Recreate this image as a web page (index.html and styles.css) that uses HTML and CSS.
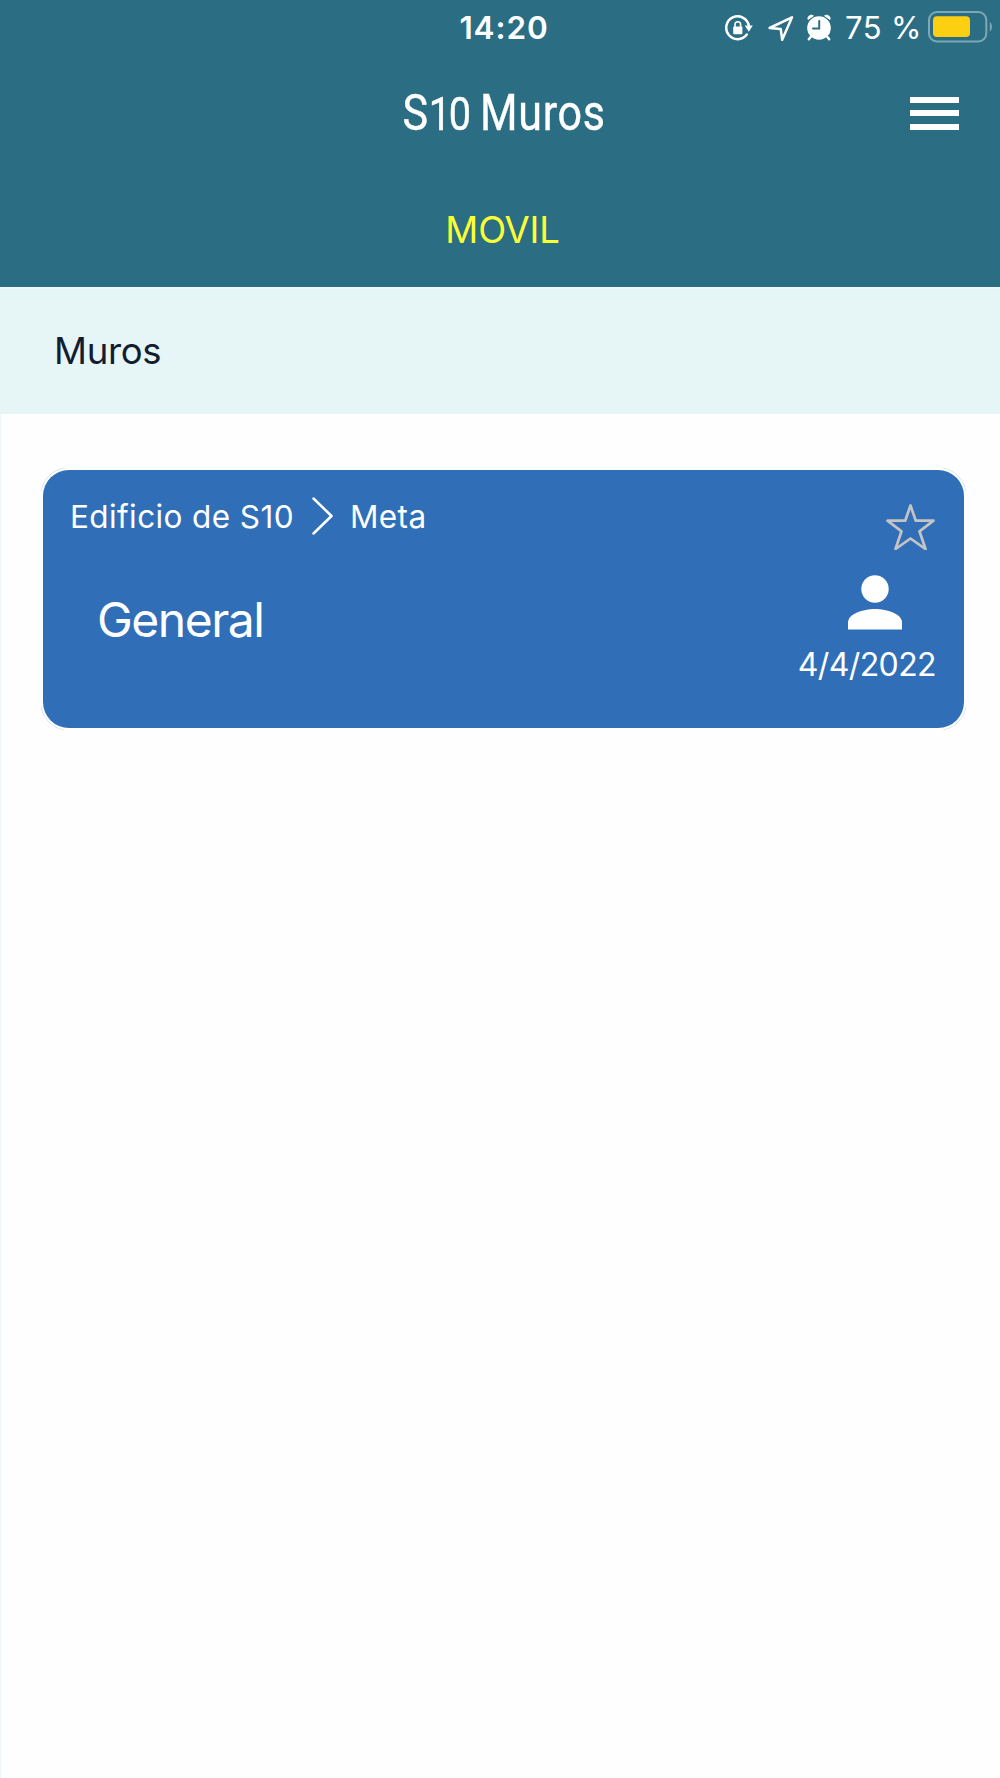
FILE: index.html
```html
<!DOCTYPE html>
<html lang="es">
<head>
    <meta charset="UTF-8">
    <meta name="viewport" content="width=device-width, initial-scale=1.0">
    <title>S10 Muros</title>
    <link rel="stylesheet" href="styles.css">
</head>
<body>
    <header class="header">
        <div class="status">
            <span class="time">14:20</span>
            <div class="indicators">
                <svg class="lock" width="28" height="28" viewBox="0 0 28 28">
                    <path d="M23.8 11.5A11.4 11.4 0 1 0 21.8 20.5" fill="none" stroke="#fff" stroke-width="2.5" stroke-linecap="round"/>
                    <path d="M19.8 11.5h8l-4 6.3z" fill="#fff"/>
                    <rect x="8.2" y="12.6" width="9.2" height="7.6" rx="1" fill="#fff"/>
                    <path d="M10 13.5v-3a2.8 2.8 0 0 1 5.6 0v3" fill="none" stroke="#fff" stroke-width="1.6"/>
                </svg>
                <svg class="arrow" width="26" height="26" viewBox="0 0 26 26">
                    <path d="M1.6 13 24 2.3 14.2 24.8 12.7 14z" fill="none" stroke="#fff" stroke-width="2.5" stroke-linejoin="round"/>
                </svg>
                <svg class="alarm" width="26" height="28" viewBox="0 0 26 28">
                    <path d="M5 22.5 2.8 25.3M21 22.5l2.2 2.8" stroke="#fff" stroke-width="2.4" stroke-linecap="round"/>
                    <path d="M2 5.5A3.5 3.5 0 0 1 7.4 1.8zM24 5.5A3.5 3.5 0 0 0 18.6 1.8z" fill="#fff" stroke="#fff" stroke-width="1" stroke-linejoin="round"/>
                    <circle cx="13" cy="14" r="11.8" fill="#fff"/>
                    <path d="M13.2 7v7.5H7" fill="none" stroke="#2b6e83" stroke-width="2" stroke-linecap="round"/>
                </svg>
                <span class="percent">75 %</span>
                <svg class="battery" width="65" height="32" viewBox="0 0 65 32">
                    <rect x="1" y="1" width="57.3" height="29.5" rx="8" fill="none" stroke="#7fa8b5" stroke-width="2"/>
                    <rect x="5" y="5.2" width="37" height="20.8" rx="4" fill="#fdcf11"/>
                    <path d="M61.8 10.8c2.8 2 2.8 8 0 10z" fill="#7fa8b5"/>
                </svg>
            </div>
        </div>
        <div class="bar">
            <h1 class="title">S<span class="digits">10</span> Muros</h1>
            <button class="menu" type="button" aria-label="Menú">
                <span></span>
                <span></span>
                <span></span>
            </button>
        </div>
        <p class="company">MOVIL</p>
    </header>

    <h2 class="section">Muros</h2>

    <main class="list">
        <article class="card">
            <div class="info">
                <div class="path">
                    <span>Edificio de S10</span>
                    <svg class="chevron" width="22" height="38" viewBox="0 0 22 38">
                        <path d="M1.5 1.5 19.5 19 1.5 36.5" fill="none" stroke="#fff" stroke-width="2.5" stroke-linecap="round" stroke-linejoin="round"/>
                    </svg>
                    <span class="place">Meta</span>
                </div>
                <h3 class="name">General</h3>
            </div>
            <div class="side">
                <svg class="star" width="50" height="48" viewBox="0 0 50 48">
                    <path d="M24.5 3.5 29.8 18.7H47.5L33.5 29.3 39.5 47 24.5 36.5 9.5 47 15.5 29.3 1.5 18.7H19.2z" fill="none" stroke="#c4c4c4" stroke-width="2.7" stroke-linejoin="round"/>
                </svg>
                <svg class="person" width="54" height="55" viewBox="0 0 54 55">
                    <circle cx="27" cy="14" r="13.7" fill="#fff"/>
                    <path d="M0 54.5V47.5C0 39 15 34 27 34S54 39 54 47.5V54.5z" fill="#fff"/>
                </svg>
                <span class="date">4/4/2022</span>
            </div>
        </article>
    </main>
</body>
</html>
```
FILE: styles.css
```css
*{
    box-sizing: border-box;
}
body{
    margin: 0;
    min-height: 1778px;
    background-color: #fefefe;
    font-family: Inter, "Liberation Sans", sans-serif;
    color: white;
}
h1, h2, h3, p{
    margin: 0;
    font-weight: 400;
}
svg{
    display: block;
}
.header{
    height: 287px;
    background-color: #2b6e83;
}
.status{
    display: grid;
    grid-template-columns: 1fr auto 1fr;
    align-items: center;
    height: 55px;
    padding: 0 7px 0 15px;
}
.time{
    grid-column: 2;
    font-size: 31.5px;
    font-weight: 600;
    letter-spacing: 0.9px;
}
.indicators{
    display: flex;
    justify-content: flex-end;
    align-items: center;
}
.arrow{
    margin-left: 15px;
}
.alarm{
    margin-left: 12px;
}
.percent{
    width: 75px;
    margin: 0 8px 0 13px;
    font-size: 31px;
    letter-spacing: 0.4px;
    white-space: nowrap;
}
.battery{
    flex: none;
    margin-top: -2px;
}
.bar{
    display: grid;
    grid-template-columns: 1fr auto 1fr;
    align-items: center;
    height: 116px;
    padding: 0 41px 0 48px;
}
.title{
    grid-column: 2;
    width: 200px;
    display: flex;
    justify-content: center;
    align-items: baseline;
    white-space: pre;
    font-family: Roboto, sans-serif;
    font-size: 50px;
    line-height: 60px;
    letter-spacing: 0.8px;
    -webkit-text-stroke: 0.4px white;
    transform: scaleX(0.86);
}
.digits{
    font-size: 46px;
    letter-spacing: -2.6px;
}
.menu{
    justify-self: end;
    display: flex;
    flex-direction: column;
    justify-content: space-between;
    width: 49px;
    height: 33px;
    padding: 0;
    border: 0;
    background: none;
}
.menu span{
    height: 6px;
    background-color: white;
}
.company{
    padding: 39px 0 0 5px;
    font-size: 36.5px;
    line-height: 40px;
    text-align: center;
    letter-spacing: -0.2px;
    color: #fbff33;
}
.section{
    height: 127px;
    padding-left: 54px;
    border-top: 2px solid #eff9fb;
    background-color: #e6f5f6;
    font-size: 36.5px;
    line-height: 124px;
    letter-spacing: -0.3px;
    color: #131d31;
}
.list{
    min-height: 1364px;
    padding: 56px 36px 0 43px;
    box-shadow: inset 1px 0 #edf5fa;
}
.card{
    position: relative;
    display: flex;
    justify-content: space-between;
    height: 258px;
    padding: 0 28px 0 27px;
    border-radius: 26px;
    background-color: #306fb8;
}
/* pale rim, visible on the corners only */
.card::before{
    content: "";
    position: absolute;
    inset: -3px;
    border: 1px solid #d3e2f1;
    border-radius: 29px;
    --c: linear-gradient(#000, #000) no-repeat;
    mask: var(--c) 0 0 / 24px 24px, var(--c) 100% 0 / 24px 24px,
          var(--c) 0 100% / 24px 24px, var(--c) 100% 100% / 24px 24px;
}
.path{
    display: flex;
    align-items: center;
    margin-top: 27px;
    height: 38px;
    font-size: 31.5px;
    letter-spacing: 0.4px;
}
.chevron{
    margin: 0 16px 0 18px;
}
.name{
    margin: 55px 0 0 27px;
    font-size: 48px;
    line-height: 60px;
    letter-spacing: -1.5px;
}
.side{
    display: flex;
    flex-direction: column;
    align-items: flex-end;
}
.star{
    margin-top: 32px;
}
.person{
    margin: 25px 34px 0 0;
}
.date{
    margin-top: 15px;
    font-size: 32px;
    line-height: 40px;
    letter-spacing: -0.6px;
}
```
